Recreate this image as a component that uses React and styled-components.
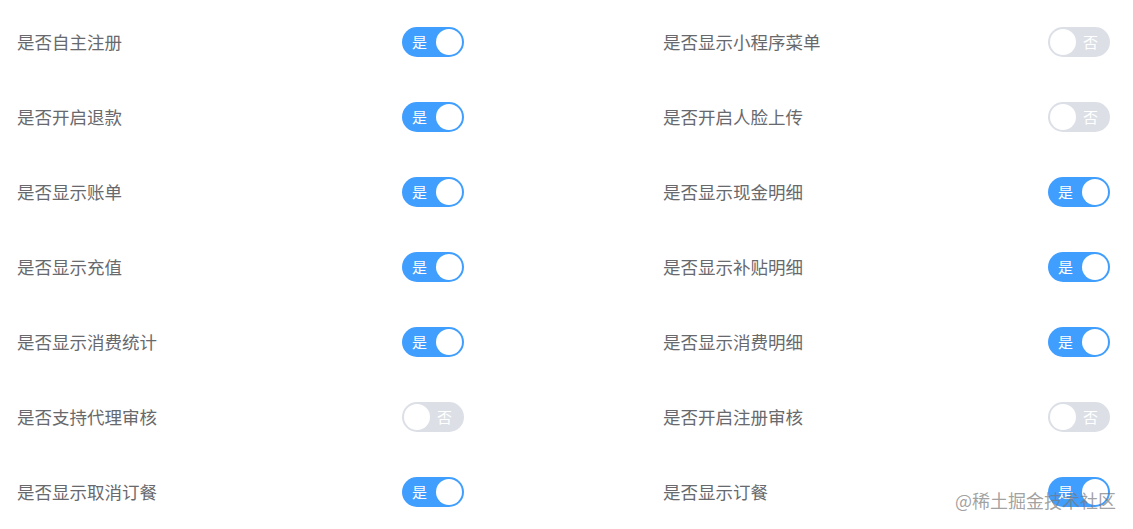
import React, {useState} from 'react';
import styled, {createGlobalStyle} from 'styled-components';

const GlobalStyle = createGlobalStyle`
  html, body {
    margin: 0;
    padding: 0;
    background: #ffffff;
  }
  body {
    font-family: "Noto Sans CJK SC", "Liberation Sans", sans-serif;
  }
`;

const Page = styled.main`
  position: relative;
  width: 1133px;
  height: 529px;
  overflow: hidden;
  padding: 4px 0 0 17px;
  box-sizing: border-box;
`;

const Grid = styled.section`
  display: grid;
  grid-template-columns: 447px 447px;
  column-gap: 199px;
`;

const Row = styled.div`
  height: 75px;
  display: flex;
  align-items: center;
  justify-content: space-between;
`;

const Label = styled.span`
  font-size: 17.5px;
  color: #67696d;
  line-height: 1;
`;

const Track = styled.button`
  position: relative;
  width: 62px;
  height: 30px;
  padding: 0;
  border: none;
  border-radius: 15px;
  background: ${props => props.checked ? "#409eff" : "#dcdfe6"};
  cursor: pointer;
  outline: none;
`;

const Knob = styled.span`
  position: absolute;
  top: 2px;
  left: ${props => props.checked ? "34px" : "2px"};
  width: 26px;
  height: 26px;
  border-radius: 50%;
  background: #ffffff;
  transition: left .2s;
`;

const TrackText = styled.span`
  position: absolute;
  top: 0;
  ${props => props.checked ? "left: 10px;" : "right: 12px;"}
  height: 30px;
  line-height: 30px;
  font-size: 15px;
  color: #ffffff;
  font-family: "Noto Sans CJK SC", sans-serif;
`;

const Watermark = styled.div`
  position: absolute;
  left: 955px;
  top: 488px;
  font-size: 18px;
  line-height: 24px;
  color: rgba(120, 120, 120, 0.7);
  pointer-events: none;
  white-space: nowrap;
`;

const Switch = ({ value, onChange }) => (
    <Track checked={value} onClick={() => onChange(!value)}>
        <TrackText checked={value}>{value ? "是" : "否"}</TrackText>
        <Knob checked={value} />
    </Track>
);

const defaultItems = [
    { label: "是否自主注册", on: true },
    { label: "是否显示小程序菜单", on: false },
    { label: "是否开启退款", on: true },
    { label: "是否开启人脸上传", on: false },
    { label: "是否显示账单", on: true },
    { label: "是否显示现金明细", on: true },
    { label: "是否显示充值", on: true },
    { label: "是否显示补贴明细", on: true },
    { label: "是否显示消费统计", on: true },
    { label: "是否显示消费明细", on: true },
    { label: "是否支持代理审核", on: false },
    { label: "是否开启注册审核", on: false },
    { label: "是否显示取消订餐", on: true },
    { label: "是否显示订餐", on: true },
];

const App = () => {
    const [items, setItems] = useState(defaultItems)

    const handleChange = (index, value) => {
        setItems(items.map((item, i) => i === index ? { ...item, on: value } : item))
    }

    return (
        <Page>
            <GlobalStyle />
            <Grid>
                {items.map((item, i) => (
                    <Row key={item.label}>
                        <Label>{item.label}</Label>
                        <Switch value={item.on} onChange={(v) => handleChange(i, v)} />
                    </Row>
                ))}
            </Grid>
            <Watermark>@稀土掘金技术社区</Watermark>
        </Page>
    );
};

export default App;
